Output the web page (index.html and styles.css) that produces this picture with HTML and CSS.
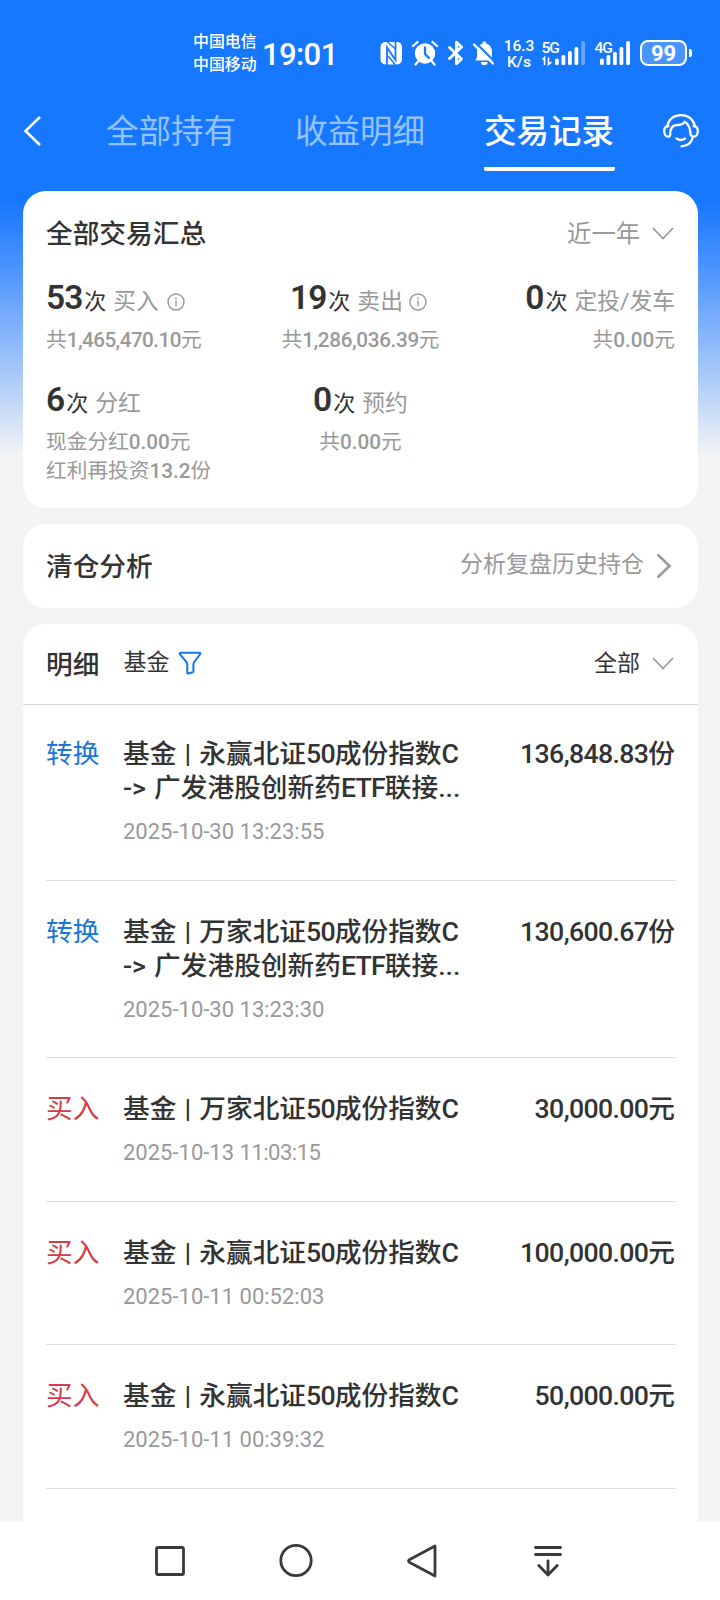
FILE: index.html
```html
<!DOCTYPE html>
<html lang="zh-CN">
<head>
<meta charset="utf-8">
<title>交易记录</title>
<link rel="stylesheet" href="styles.css">
</head>
<body>
<div class="screen">
  <header class="status">
    <div class="carriers"><span>中国电信</span><span>中国移动</span></div>
    <div class="clock">19:01</div>
    <svg class="st-icons" width="116" height="26" viewBox="380 40 116 26" fill="none">
      <rect x="380.500" y="42" width="21.500" height="22.500" rx="5" fill="#fff"/>
      <path d="M387 65V47.500l8.500 12.500V41.500" stroke="#1677ff" stroke-width="1.800"/>
      <path d="M387 41.500l8.500 7.500M388 56l7.500 9" stroke="#1677ff" stroke-width="1.400"/>
      <circle cx="425" cy="53.500" r="10.200" fill="#fff"/>
      <path d="M413 46l4.500-4M437 46l-4.500-4M418 61.500l-2.500 3M432 61.500l2.500 3" stroke="#fff" stroke-width="2.300" stroke-linecap="round"/>
      <path d="M425 47.500v6.500l4 4" stroke="#1677ff" stroke-width="2.300" stroke-linecap="round"/>
      <path d="M449.500 47.500l12 11.500-5 4.800V42.200l5 4.800-12 11.500" stroke="#fff" stroke-width="2.900" stroke-linejoin="round" stroke-linecap="round"/>
      <path d="M475 60.500c2-1.500 2-3 2-8 0-4.500 2.500-8 5.500-9 0-3 3.500-3 3.500 0 4 1 6 4.500 6 9s0 6.500 2 8z" fill="#fff"/>
      <path d="M481 62h6.500a3.200 3.200 0 0 1-6.500 0z" fill="#fff"/>
      <path d="M476.500 43.500l19 19" stroke="#1677ff" stroke-width="2"/>
      <path d="M474 44.500l19 19" stroke="#fff" stroke-width="2.400" stroke-linecap="round"/>
    </svg>
    <div class="speed"><span>16.3</span><span>K/s</span></div>
    <svg class="st-signal" width="48" height="30" viewBox="540 38 48 30">
      <text x="541.500" y="53" class="net">5G</text>
      <g fill="#fff"><rect x="555" y="58.500" width="3.800" height="6.500" rx="1.500"/><rect x="561.500" y="55" width="3.800" height="10" rx="1.500"/><rect x="568" y="51" width="3.800" height="14" rx="1.500"/><rect x="574.500" y="47" width="3.800" height="18" rx="1.500"/><rect x="581.200" y="41" width="3.800" height="24" rx="1.500" opacity=".35"/></g>
      <path d="M542.500 59.500l2-2v7.500M548.500 57.500v7l3-2.500" stroke="#fff" stroke-width="1.600" fill="none"/>
    </svg>
    <svg class="st-signal2" width="38" height="30" viewBox="594 38 38 30">
      <text x="594.500" y="53" class="net">4G</text>
      <g fill="#fff"><rect x="600" y="58.500" width="3.800" height="6.500" rx="1.500"/><rect x="606.500" y="55" width="3.800" height="10" rx="1.500"/><rect x="613" y="52" width="3.800" height="13" rx="1.500"/><rect x="619.500" y="47" width="3.800" height="18" rx="1.500"/><rect x="626.200" y="41" width="3.800" height="24" rx="1.500"/></g>
    </svg>
    <div class="battery">99</div><i class="nub"></i>
  </header>

  <nav class="tabs">
    <svg class="back" width="20" height="32" viewBox="0 0 20 32"><path d="M18 2L3.500 16 18 30" fill="none" stroke="#fff" stroke-width="2.600"/></svg>
    <span class="tab">全部持有</span>
    <span class="tab">收益明细</span>
    <span class="tab active">交易记录</span>
    <svg class="service" width="38" height="36" viewBox="662 112 38 36" fill="none" stroke="#fff" stroke-width="2.300" stroke-linecap="round" stroke-linejoin="round">
      <path d="M667 126.500C669 119 674 115.200 681 115.200S693 119 695.200 126.500"/>
      <path d="M668.500 126.200c-3 0-4.300 2-4.300 4.800s1.300 5.700 4 5.700c1.500 0 2-1 2-2.500 0-6 2-9.200 7-9.200 4 0 6-1 7.500-3.200 3.500 2 5.300 5.500 5.800 11.500"/>
      <path d="M693.500 126.200c3 0 4.300 2 4.300 4.800s-1.300 5.700-4.300 5.700c-1.500 0-2.500-.7-3-2"/>
      <path d="M693 137c-1.500 5.500-5.500 9-11.500 9.300M676.500 138.500c2.500 1.800 6 1.800 8.500 0"/>
    </svg>
  </nav>

  <main class="content">
    <section class="card summary">
      <div class="card-head"><h2>全部交易汇总</h2><span class="pick gray">近一年<svg width="22" height="13" viewBox="0 0 22 13"><path d="M1 1l10 10.500L21 1"/></svg></span></div>
      <div class="stats">
        <div class="stat"><p class="line"><b>53</b><em>次</em><span>买入</span><svg class="info" width="18" height="18" viewBox="0 0 18 18"><circle cx="9" cy="9" r="8"/><path d="M9 7.800v5.400M9 4.500v1.700"/></svg></p><p class="sub">共<i class="tight">1,465,470.10</i>元</p></div>
        <div class="stat mid"><p class="line"><b>19</b><em>次</em><span>卖出</span><svg class="info" width="18" height="18" viewBox="0 0 18 18"><circle cx="9" cy="9" r="8"/><path d="M9 7.800v5.400M9 4.500v1.700"/></svg></p><p class="sub">共<i class="snug">1,286,036.39</i>元</p></div>
        <div class="stat end"><p class="line"><b>0</b><em>次</em><span>定投/发车</span></p><p class="sub">共<i>0.00</i>元</p></div>
        <div class="stat"><p class="line"><b>6</b><em>次</em><span>分红</span></p><p class="sub">现金分红<i>0.00</i>元<br>红利再投资<i>13.2</i>份</p></div>
        <div class="stat mid"><p class="line"><b>0</b><em>次</em><span>预约</span></p><p class="sub">共<i>0.00</i>元</p></div>
      </div>
    </section>

    <section class="card analysis"><h2>清仓分析</h2><span class="more">分析复盘历史持仓<svg width="16" height="26" viewBox="0 0 16 26"><path d="M1.500 1.500L13.500 13 1.500 24.500"/></svg></span></section>

    <section class="card detail">
      <div class="detail-head"><h2>明细</h2><span class="kind">基金</span>
        <svg class="funnel" width="24" height="24" viewBox="0 0 24 24"><path d="M2.500 1.700h19c.8 0 1 .8.600 1.400l-6.100 8.200c-.5.700-.6 1-.6 2v6.900c0 .6-.3.800-.8 1l-4.400 1.300c-.6.200-.9 0-.9-.7v-8.500c0-1-.1-1.300-.6-2L1.900 3.100c-.4-.6-.2-1.400.6-1.400z"/></svg>
        <span class="pick dark">全部<svg width="22" height="13" viewBox="0 0 22 13"><path d="M1 1l10 10.500L21 1"/></svg></span></div>
      <ul class="list">
        <li><span class="type swap">转换</span><div class="info-col"><p class="name">基金 | 永赢北证<i>50</i>成份指数C<br>-&gt; 广发港股创新药<i>ETF</i>联接...</p><p class="date">2025-10-30 13:23:55</p></div><span class="amount"><i>136,848.83</i>份</span></li>
        <li><span class="type swap">转换</span><div class="info-col"><p class="name">基金 | 万家北证<i>50</i>成份指数C<br>-&gt; 广发港股创新药<i>ETF</i>联接...</p><p class="date">2025-10-30 13:23:30</p></div><span class="amount"><i>130,600.67</i>份</span></li>
        <li><span class="type buy">买入</span><div class="info-col"><p class="name">基金 | 万家北证<i>50</i>成份指数C</p><p class="date">2025-10-13 <i class="ones">11:03:15</i></p></div><span class="amount"><i>30,000.00</i>元</span></li>
        <li><span class="type buy">买入</span><div class="info-col"><p class="name">基金 | 永赢北证<i>50</i>成份指数C</p><p class="date">2025-10-11 00:52:03</p></div><span class="amount"><i>100,000.00</i>元</span></li>
        <li><span class="type buy">买入</span><div class="info-col"><p class="name">基金 | 永赢北证<i>50</i>成份指数C</p><p class="date">2025-10-11 00:39:32</p></div><span class="amount"><i>50,000.00</i>元</span></li>
      </ul>
    </section>
  </main>

  <footer class="sysnav">
    <svg width="36" height="36" viewBox="0 0 36 36"><rect x="4.500" y="4.500" width="27" height="27" rx="1.500"/></svg>
    <svg width="36" height="36" viewBox="0 0 36 36"><circle cx="18" cy="17.500" r="15.200"/></svg>
    <svg width="36" height="36" viewBox="0 0 36 36"><path d="M31 3v30L5.300 19.300q-1.500-1.300 0-2.600z"/></svg>
    <svg width="36" height="36" viewBox="0 0 36 36"><path d="M5.500 4.500h25M5.500 11.500h25M18 18v14M8.800 22.500l9.200 9.500 9.200-9.500"/></svg>
  </footer>
</div>
</body>
</html>
```
FILE: styles.css
```css
* { box-sizing: border-box; }
body, h2, p, ul { margin: 0; padding: 0; }
i, em { font-style: normal; }
svg { display: block; flex: none; }
body { font-family: Roboto, "Noto Sans CJK SC", sans-serif; color: #333; }

.screen {
  width: 720px;
  height: 1600px;
  overflow: hidden;
  display: flex;
  flex-direction: column;
  background: linear-gradient(#1677ff 0, #1677ff 200px, #4a93fd 265px, #a9c9f9 375px, #f4f4f4 456px, #f4f4f4 100%);
}

/* status bar */
.status { height: 92px; padding-left: 193px; display: flex; align-items: flex-start; color: #fff; flex: none; }
.carriers { display: flex; flex-direction: column; padding-top: 30px; width: 66px; font-size: 15.900px; line-height: 23px; font-weight: 500; white-space: nowrap; }
.clock { margin-left: 3px; padding-top: 37px; width: 118px; font-size: 31px; line-height: 36px; font-weight: 500; letter-spacing: -.6px; }
.st-icons { margin-top: 40px; }
.speed { width: 36px; margin-left: 5px; padding-top: 38px; display: flex; flex-direction: column; align-items: center; font-size: 15.500px; line-height: 16px; font-weight: 500; }
.st-signal { margin-top: 38px; margin-left: 3px; }
.st-signal2 { margin-top: 38px; margin-left: 6px; }
.net { font: 500 15.500px Roboto, sans-serif; fill: #fff; letter-spacing: -1px; }
.battery { margin: 40px 0 0 8px; width: 47px; height: 26px; border: 2px solid #fff; border-radius: 8px; background: #4a94ff; font-size: 22px; line-height: 23px; font-weight: 700; text-align: center; }
.nub { width: 3px; height: 8px; margin: 49px 0 0 2px; border-radius: 0 2px 2px 0; background: #fff; }

/* tabs */
.tabs { height: 99px; flex: none; display: flex; align-items: flex-start; padding-left: 22px; color: #fff; }
.back { margin: 23px 64px 0 0; }
.tab { width: 131px; height: 79px; margin-right: 58px; padding-top: 16px; font-size: 32.500px; line-height: 48px; white-space: nowrap; color: #94c3ff; }
.tab.active { margin-right: 47px; color: #fff; font-weight: 500; border-bottom: 4px solid #fff; border-radius: 2px; }
.service { margin-top: 20px; }

/* cards */
.content { flex: 1; min-height: 0; overflow: hidden; padding: 0 22px 0 23px; display: flex; flex-direction: column; gap: 16px; }
.card { background: #fff; border-radius: 23px; flex: none; padding: 0 23px; }
h2 { font-size: 26.700px; font-weight: 500; line-height: 40px; padding-top: 1px; }
.summary { height: 317px; padding-top: 22px; }
.card-head { display: flex; align-items: center; justify-content: space-between; height: 40px; }
.pick { display: flex; align-items: center; gap: 12px; font-size: 24.300px; line-height: 36px; padding-right: 1px; padding-top: 2px; }
.pick svg { margin-top: -1px; }
.pick svg path { fill: none; stroke: #999; stroke-width: 1.700; }
.gray { color: #999; }
.stats { display: grid; grid-template-columns: 1fr 1fr 1fr; row-gap: 0; padding-top: 23px; }
.stat { min-height: 102px; white-space: nowrap; }
.line { height: 44px; display: flex; align-items: baseline; line-height: 44px; }
.line b { font-size: 33.500px; font-weight: 600; letter-spacing: -1px; }
.line em { font-size: 22px; font-weight: 400; margin-left: 2px; }
.line span { font-size: 22.800px; color: #999; margin-left: 7px; }
.info { margin-left: 8px; align-self: center; position: relative; top: 4px; fill: none; stroke: #999; stroke-width: 1.400; }
.sub { font-size: 20.700px; line-height: 29px; color: #999; padding-top: 6px; }
.sub i { font-weight: 500; }
.sub .tight { letter-spacing: -.55px; }
.sub .snug { letter-spacing: -.35px; }
.mid .line { justify-content: center; }
.mid { text-align: center; }
.mid .info { margin-left: 6px; margin-right: 4px; }
.end .line { justify-content: flex-end; }
.end { text-align: right; }

.analysis { height: 84px; display: flex; align-items: center; justify-content: space-between; }
.more { display: flex; align-items: center; gap: 12px; font-size: 23px; line-height: 34px; color: #999; padding-right: 3px; margin-top: -2px; }
.more svg { margin-top: 2px; }
.more path { fill: none; stroke: #999; stroke-width: 2.600; }

.detail { border-radius: 23px 23px 0 0; height: 897px; }
.detail-head { height: 81px; margin: 0 -23px; padding: 0 23px; display: flex; align-items: center; border-bottom: 1px solid #d8d8d8; }
.kind { font-size: 23px; line-height: 34px; margin: -3px 9px 0 24px; }
.funnel { margin-top: -2px; }
.funnel path { fill: none; stroke: #1677e8; stroke-width: 2; }
.dark { margin-left: auto; font-size: 23px; padding-top: 0; margin-top: -1px; }
.list { list-style: none; }
.list li { display: flex; padding-top: 34px; height: 143.500px; border-bottom: 1px solid #ddd; font-size: 26.700px; line-height: 34px; font-weight: 500; white-space: nowrap; }
.list li:nth-child(-n+2) { height: 177.500px; }
.list li:first-child { padding-top: 32px; height: 175.500px; }
.type { width: 77px; flex: none; font-weight: 400; }
.swap { color: #1a76d8; }
.buy { color: #d63c4a; }
.info-col { flex: 1; }
.name { word-spacing: 1.500px; }
.name i { letter-spacing: -.8px; }
.date { margin-top: 15px; font-size: 22px; line-height: 24px; font-weight: 400; color: #999; }
.date .ones { letter-spacing: -.5px; }
.amount i { letter-spacing: -.65px; }

/* system navigation */
.sysnav { height: 79px; flex: none; background: #fff; display: flex; align-items: center; gap: 90px; padding-left: 152px; }
.sysnav svg { fill: none; stroke: #3a3a3c; stroke-width: 2.800; stroke-linejoin: round; stroke-linecap: round; }
```
